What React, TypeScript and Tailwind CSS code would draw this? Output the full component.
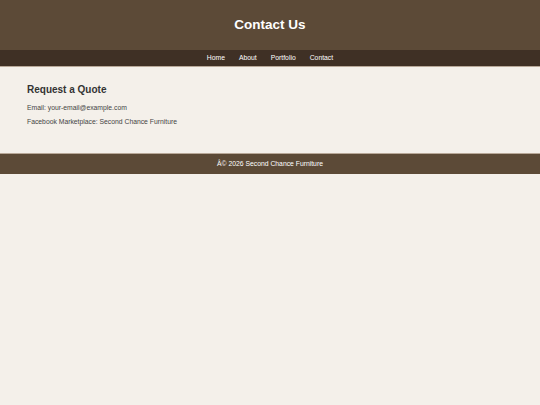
import React from 'react';

const links = ['Home', 'About', 'Portfolio', 'Contact'];

const App: React.FC = () => {
  return (
    <div className="min-h-[405px] bg-[#f4f0ea] font-['Liberation_Sans',Arial,sans-serif] text-[#333]">
      {/* Header */}
      <header className="h-[50px] bg-[#5c4a37] flex items-center justify-center">
        <h1 className="text-[13.5px] font-bold text-white leading-none">Contact Us</h1>
      </header>

      {/* Nav */}
      <nav className="h-[17px] bg-[#3f3025] border-b border-[#b8a898] flex items-center justify-center gap-[14px]">
        {links.map((l) => (
          <a key={l} className="text-[6.8px] text-white leading-none">
            {l}
          </a>
        ))}
      </nav>

      {/* Main */}
      <main className="px-[27px] pt-[18px] pb-[27px]">
        <h2 className="text-[10px] font-bold text-[#333] leading-none mb-[10px]">Request a Quote</h2>
        <p className="text-[6.8px] text-[#444] leading-none mb-[7px]">Email: your-email@example.com</p>
        <p className="text-[6.8px] text-[#444] leading-none">Facebook Marketplace: Second Chance Furniture</p>
      </main>

      {/* Footer */}
      <footer className="h-[21px] pt-[1px] bg-[#5c4a37] border-t border-[#b8a898] flex items-center justify-center">
        <p className="text-[6.8px] text-white leading-none">Â© 2026 Second Chance Furniture</p>
      </footer>
    </div>
  );
};

export default App;
